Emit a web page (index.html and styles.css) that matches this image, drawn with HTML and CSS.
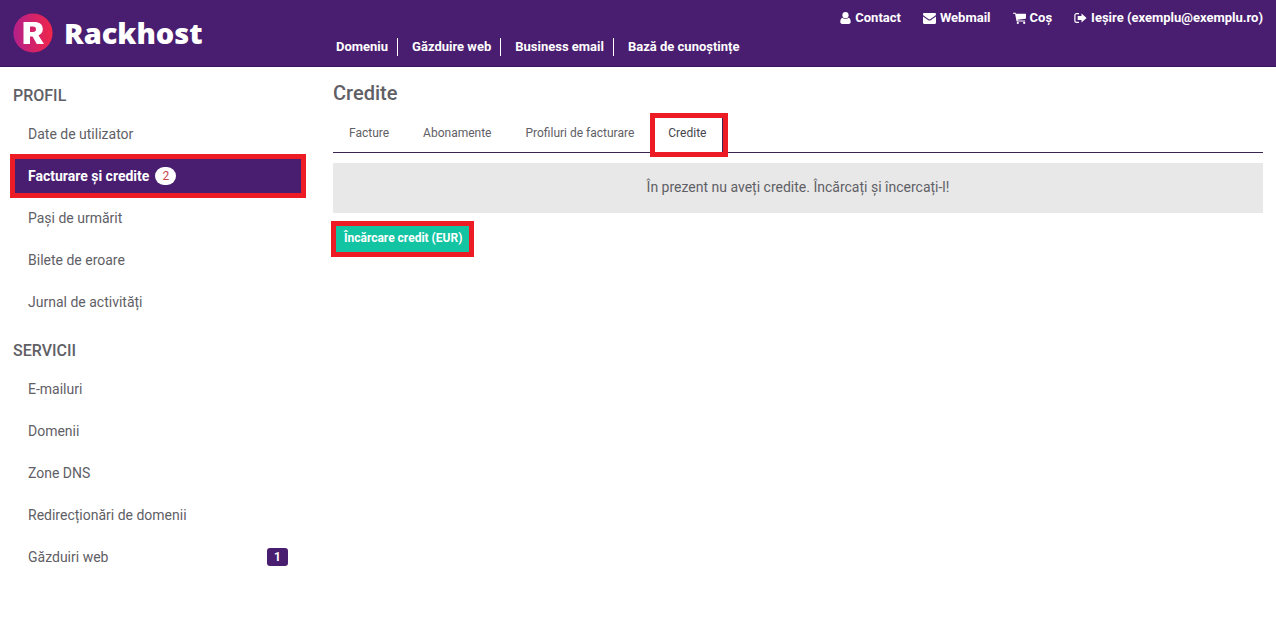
FILE: index.html
```html
<!DOCTYPE html>
<html lang="ro">
<head>
<meta charset="utf-8">
<meta name="viewport" content="width=device-width, initial-scale=1">
<title>Rackhost - Credite</title>
<link rel="stylesheet" href="styles.css">
</head>
<body>
<header class="header">
  <a class="logo" href="#">
    <svg class="logo-mark" viewBox="0 0 40 40" aria-hidden="true">
      <defs><linearGradient id="mark" x1="0" y1="0" x2="1" y2="0"><stop offset="0" stop-color="#b5208a"/><stop offset="1" stop-color="#f0264a"/></linearGradient></defs>
      <circle cx="20" cy="20" r="19.6" fill="url(#mark)"/>
      <path fill="#fff" fill-rule="evenodd" d="M10.500 9h10.500c5.500 0 8.800 2.500 8.800 7 0 3.100-1.600 5.300-4.300 6.400L31 31h-7.200l-4.200-7.500H17V31h-6.500zM17 13.500v5.500h3c2 0 3-1 3-2.800s-1-2.700-3-2.700z"/>
    </svg>
    <span class="logo-name">Rackhost</span>
  </a>
  <div class="header-menus">
    <nav class="user-nav" aria-label="Cont">
      <a href="#"><svg class="icon icon-user" viewBox="0 0 11 12" aria-hidden="true"><circle cx="5.500" cy="3.200" r="3.100"/><path d="M2.500 5.700C.9 6.200.3 8 .3 9.800c0 1.400.7 2.100 1.900 2.100h6.600c1.200 0 1.900-.7 1.900-2.100 0-1.800-.6-3.600-2.200-4.100a4.100 4.100 0 0 1-6 0z"/></svg>Contact</a>
      <a href="#"><svg class="icon icon-wide" viewBox="0 0 13 12" aria-hidden="true"><path d="M0 2.200C0 1.500.5 1 1.200 1h10.600c.7 0 1.200.5 1.200 1.200 0 .8-.6 1.500-1.200 1.900L7.600 7c-.7.500-1.500.5-2.200 0L1.200 4.100C.6 3.700 0 3 0 2.200z"/><path d="M0 4.400 5 7.900c.9.700 2.100.7 3 0l5-3.500v6.400c0 .7-.5 1.200-1.200 1.200H1.200C.5 12 0 11.500 0 10.800z"/></svg>Webmail</a>
      <a href="#"><svg class="icon icon-wide" viewBox="0 0 13 12" aria-hidden="true"><path d="M0 .8h2.300c.5 0 .6.500.7 1h9.500c.3 0 .5.200.5.500v4c0 .3-.2.500-.5.500L4.600 7.700l.2.900h7c.6 0 .6 1 0 1H4c-.4 0-.6-.4-.5-.7L2.100 1.800H0z"/><circle cx="4.800" cy="10.900" r="1.100"/><circle cx="11.200" cy="10.900" r="1.100"/></svg>Coș</a>
      <a href="#"><svg class="icon icon-wide" viewBox="0 0 13 12" aria-hidden="true"><path d="M5 1H2.700C1.200 1 .3 2 .3 3.300v5.400C.3 10 1.200 11 2.700 11H5V9.800H2.700c-.7 0-1.200-.4-1.200-1.100V3.300c0-.7.5-1.100 1.200-1.100H5z"/><path d="M7.500 1.500 12.600 6l-5.100 4.500V8H3.700V4h3.800z"/></svg>Ieșire (exemplu@exemplu.ro)</a>
    </nav>
    <nav class="main-nav" aria-label="Principal">
      <a href="#">Domeniu</a>
      <a href="#">Găzduire web</a>
      <a href="#">Business email</a>
      <a href="#">Bază de cunoștințe</a>
    </nav>
  </div>
</header>
<div class="page">
  <aside class="sidebar">
    <h2 class="side-title">PROFIL</h2>
    <nav class="side-nav" aria-label="Profil">
      <a href="#">Date de utilizator</a>
      <a class="active" href="#">Facturare și credite <span class="pill">2</span></a>
      <a href="#">Pași de urmărit</a>
      <a href="#">Bilete de eroare</a>
      <a href="#">Jurnal de activități</a>
    </nav>
    <h2 class="side-title">SERVICII</h2>
    <nav class="side-nav" aria-label="Servicii">
      <a href="#">E-mailuri</a>
      <a href="#">Domenii</a>
      <a href="#">Zone DNS</a>
      <a href="#">Redirecționări de domenii</a>
      <a href="#">Găzduiri web <span class="count">1</span></a>
    </nav>
  </aside>
  <main class="content">
    <h1 class="title">Credite</h1>
    <nav class="tabs" aria-label="Facturare">
      <a href="#">Facture</a>
      <a href="#">Abonamente</a>
      <a href="#">Profiluri de facturare</a>
      <a class="current" href="#" aria-current="page">Credite</a>
    </nav>
    <p class="notice">În prezent nu aveți credite. Încărcați și încercați-l!</p>
    <button class="charge" type="button">Încărcare credit (EUR)</button>
  </main>
</div>
</body>
</html>
```

FILE: styles.css
```css
* {
  box-sizing: border-box;
}

body {
  margin: 0;
  background: #fff;
  color: #5f6066;
  font: 14px/20px Roboto, sans-serif;
}

a {
  color: inherit;
  text-decoration: none;
}

.header,
.page {
  display: grid;
  grid-template-columns: 25% 1fr;
}

.header {
  background: #491d6f;
  border-bottom: 1px solid #3b155e;
  color: #fff;
  font-size: 13px;
  font-weight: 700;
}

.logo {
  display: flex;
  align-items: center;
  gap: 11px;
  padding-left: 13px;
}

.logo-mark {
  width: 40px;
  height: 40px;
}

.logo-name {
  font: 800 29px/40px "Open Sans", sans-serif;
}

.header-menus {
  padding: 8px 13px 10px 17px;
}

.user-nav {
  display: flex;
  justify-content: flex-end;
  gap: 22px;
}

.user-nav a {
  display: flex;
  align-items: center;
  gap: 4px;
}

.icon {
  height: 12px;
  fill: #fff;
}

.icon-user {
  width: 11px;
}

.icon-wide {
  width: 13px;
}

.main-nav {
  display: flex;
  padding-top: 10px;
  line-height: 18px;
}

.main-nav a + a {
  margin-left: 9px;
  padding-left: 14px;
  border-left: 1px solid #fff;
}

.sidebar {
  padding: 19px 13px;
}

.side-title {
  margin: 0 0 7px;
  font-size: 16px;
  font-weight: 500;
  line-height: 20px;
}

.side-nav {
  display: grid;
  margin-bottom: 18px;
}

.side-nav a {
  display: flex;
  align-items: center;
  min-height: 42px;
  padding: 0 18px 0 15px;
}

.side-nav .active {
  gap: 6px;
  min-height: 44px;
  margin: -1px 0 -1px -3px;
  padding-left: 13px;
  border: 5px solid #ed1c24;
  background: #491d6f;
  color: #fff;
  font-weight: 700;
}

.pill {
  min-width: 21px;
  border-radius: 9px;
  background: #fff;
  color: #c9444d;
  font-size: 12px;
  font-weight: 400;
  line-height: 18px;
  text-align: center;
}

.count {
  min-width: 21px;
  margin-left: auto;
  border-radius: 3px;
  background: #491d6f;
  color: #fff;
  font-size: 12px;
  font-weight: 700;
  line-height: 18px;
  text-align: center;
}

.content {
  padding: 14px 13px 14px 14px;
}

.title {
  margin: 0 0 8px;
  font-size: 20px;
  font-weight: 500;
  line-height: 24px;
}

.tabs {
  display: flex;
  border-bottom: 1px solid #3a2450;
  font-size: 12px;
}

.tabs a {
  padding: 10px 17px 9px;
}

.tabs a:first-child {
  padding-left: 16px;
}

.tabs .current {
  position: relative;
  border-right: 1px solid #3a2450;
  padding-right: 16px;
  color: #45464c;
}

.tabs .current::after {
  content: "";
  position: absolute;
  inset: 0 -6px -5px -1px;
  border: 5px solid #ed1c24;
}

.notice {
  margin: 10px 0 8px;
  padding: 14px 15px 16px;
  background: #e8e8e8;
  text-align: center;
}

.charge {
  display: block;
  margin: 0 0 0 -2px;
  padding: 3px 7px 5px 8px;
  border: 5px solid #ed1c24;
  background: #13c4a3;
  color: #fff;
  font: 700 12px/18px Roboto, sans-serif;
}
```
